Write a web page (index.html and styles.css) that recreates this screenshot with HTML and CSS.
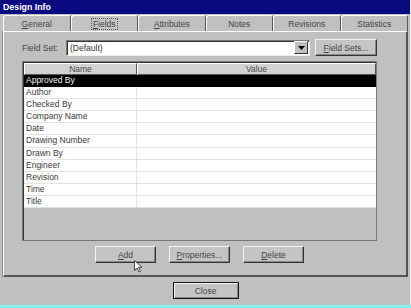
FILE: index.html
```html
<!DOCTYPE html>
<html lang="en">
<head>
  <meta charset="UTF-8" />
  <title>Design Info</title>
  <link rel="stylesheet" href="styles.css">
</head>
<body>
<div class="dialog">
  <div class="titlebar">Design Info</div>

  <!-- tab strip -->
  <div class="tabs">
    <div class="tab"><u>G</u>eneral</div>
    <div class="tab active"><span class="focus"><u>F</u>ields</span></div>
    <div class="tab"><u>A</u>ttributes</div>
    <div class="tab">Notes</div>
    <div class="tab">Revisions</div>
    <div class="tab">Statistics</div>
  </div>

  <div class="panel">
    <div class="fieldset-row">
      <span class="label">Field Set:</span>
      <div class="combo">
        <span class="combo-text">(Default)</span>
        <span class="combo-btn">
          <svg width="7" height="4" viewBox="0 0 7 4"><path d="M0 0h7L3.5 4z" fill="#000"/></svg>
        </span>
      </div>
      <button class="btn btn-sets"><u>F</u>ield Sets...</button>
    </div>

    <div class="list">
      <div class="list-head">
        <div class="col-name">Name</div>
        <div class="col-value">Value</div>
      </div>
      <div class="row selected"><div class="col-name">Approved By</div><div class="col-value"></div></div>
      <div class="row"><div class="col-name">Author</div><div class="col-value"></div></div>
      <div class="row"><div class="col-name">Checked By</div><div class="col-value"></div></div>
      <div class="row"><div class="col-name">Company Name</div><div class="col-value"></div></div>
      <div class="row"><div class="col-name">Date</div><div class="col-value"></div></div>
      <div class="row"><div class="col-name">Drawing Number</div><div class="col-value"></div></div>
      <div class="row"><div class="col-name">Drawn By</div><div class="col-value"></div></div>
      <div class="row"><div class="col-name">Engineer</div><div class="col-value"></div></div>
      <div class="row"><div class="col-name">Revision</div><div class="col-value"></div></div>
      <div class="row"><div class="col-name">Time</div><div class="col-value"></div></div>
      <div class="row"><div class="col-name">Title</div><div class="col-value"></div></div>
    </div>

    <div class="actions">
      <button class="btn"><u>A</u>dd</button>
      <button class="btn"><u>P</u>roperties...</button>
      <button class="btn"><u>D</u>elete</button>
      <!-- mouse pointer over the Add button -->
      <svg class="cursor" width="9" height="13" viewBox="0 0 9 13">
        <path d="M0.5 0.5v10l2.5-2.5 2 4 1.5-0.7-2-4h3.5z" fill="#fff" stroke="#444" stroke-width="1"/>
      </svg>
    </div>
  </div>

  <div class="footer">
    <button class="btn btn-default">Close</button>
  </div>
</div>
<div class="strip"></div>
</body>
</html>
```

FILE: styles.css
```css
* {
  margin: 0;
  padding: 0;
  box-sizing: border-box;
}

body {
  width: 411px;
  height: 308px;
  overflow: hidden;
  background: #c0c0c0;
  font-family: 'Liberation Sans', Arial, sans-serif;
  font-size: 8.5px;
  color: #3a3a3a;
}

.dialog {
  height: 305px;
  background: #c0c0c0;
  border-right: 1px solid #f4f4f4;
  padding: 0 2px 0 3px;
}

.titlebar {
  height: 14px;
  margin: 0 -2px 0 -3px;
  padding: 1px 3px;
  background: #0a0a80;
  color: #fff;
  font-weight: bold;
  font-size: 8.8px;
  line-height: 12px;
}

/* tabs */
.tabs {
  display: flex;
  height: 16px;
  margin-top: 1px;
}

.tab {
  flex: 1;
  text-align: center;
  line-height: 14px;
  padding-top: 1px;
  border-top: 1px solid #fff;
  border-left: 1px solid #fff;
  border-right: 1px solid #555;
  border-top-left-radius: 3px;
  border-top-right-radius: 3px;
  color: #444;
}

.tab.active {
  background: #c4c4c4;
}

.focus {
  border: 1px dotted #555;
  padding: 0 1px;
}

/* panel */
.panel {
  height: 246px;
  border-left: 1px solid #fff;
  border-top: 1px solid #fff;
  border-right: 2px solid #555;
  border-bottom: 2px solid #555;
  box-shadow: -1px 0 0 #888;
  padding: 7px 0 0 18px;
  position: relative;
}

.fieldset-row {
  display: flex;
  align-items: center;
  width: 355px;
  height: 17px;
}

.label {
  width: 44px;
  color: #444;
}

.combo {
  display: flex;
  align-items: center;
  width: 244px;
  height: 16px;
  background: #fff;
  border-top: 1px solid #777;
  border-left: 1px solid #777;
  border-right: 1px solid #eee;
  border-bottom: 1px solid #eee;
  box-shadow: inset 1px 1px 0 #333;
}

.combo-text {
  flex: 1;
  padding-left: 3px;
  color: #333;
}

.combo-btn {
  width: 14px;
  height: 13px;
  margin-right: 1px;
  background: #c0c0c0;
  border-top: 1px solid #fff;
  border-left: 1px solid #fff;
  border-right: 1px solid #333;
  border-bottom: 1px solid #333;
  display: flex;
  align-items: center;
  justify-content: center;
}

.btn {
  font-family: 'Liberation Sans', Arial, sans-serif;
  font-size: 8.5px;
  color: #444;
  background: #c4c4c4;
  width: 61px;
  height: 17px;
  border-top: 1px solid #f4f4f4;
  border-left: 1px solid #f4f4f4;
  border-right: 1px solid #333;
  border-bottom: 1px solid #333;
  box-shadow: inset -1px -1px 0 #888;
}

.btn-sets {
  margin-left: 5px;
  width: 62px;
}

/* list view */
.list {
  width: 355px;
  height: 180px;
  margin-top: 5px;
  background: #c0c0c0;
  border: 1px solid #777;
  box-shadow: inset 1px 1px 0 #333;
  padding: 1px 0 0 1px;
}

.list-head,
.row {
  display: flex;
}

.list-head {
  height: 12px;
  line-height: 10px;
  text-align: center;
  color: #4a4a4a;
}

.list-head > div {
  background: #d2d2d2;
  border-top: 1px solid #fff;
  border-left: 1px solid #fff;
  border-right: 1px solid #555;
  border-bottom: 1px solid #555;
}

.col-name {
  width: 113px;
}

.col-value {
  flex: 1;
}

.row {
  height: 12.1px;
  line-height: 11px;
  background: #fff;
  border-bottom: 1px solid #e2e2e2;
}

.row .col-name {
  padding-left: 2px;
  border-right: 1px solid #e2e2e2;
}

.row.selected {
  background: #000;
  color: #f2f2f2;
  border-bottom-color: #000;
}

.row.selected .col-name {
  border-right-color: #000;
}

.actions {
  display: flex;
  justify-content: center;
  gap: 13px;
  width: 355px;
  margin-top: 5px;
  position: relative;
}

.cursor {
  position: absolute;
  left: 112px;
  top: 14px;
}

.footer {
  display: flex;
  justify-content: center;
  padding-top: 5px;
}

.btn-default {
  width: 66px;
  height: 17px;
  border: 1px solid #111;
  box-shadow: inset 1px 1px 0 #f4f4f4, inset -1px -1px 0 #888;
}

.strip {
  height: 3px;
  background: #8af2ee;
}
```
